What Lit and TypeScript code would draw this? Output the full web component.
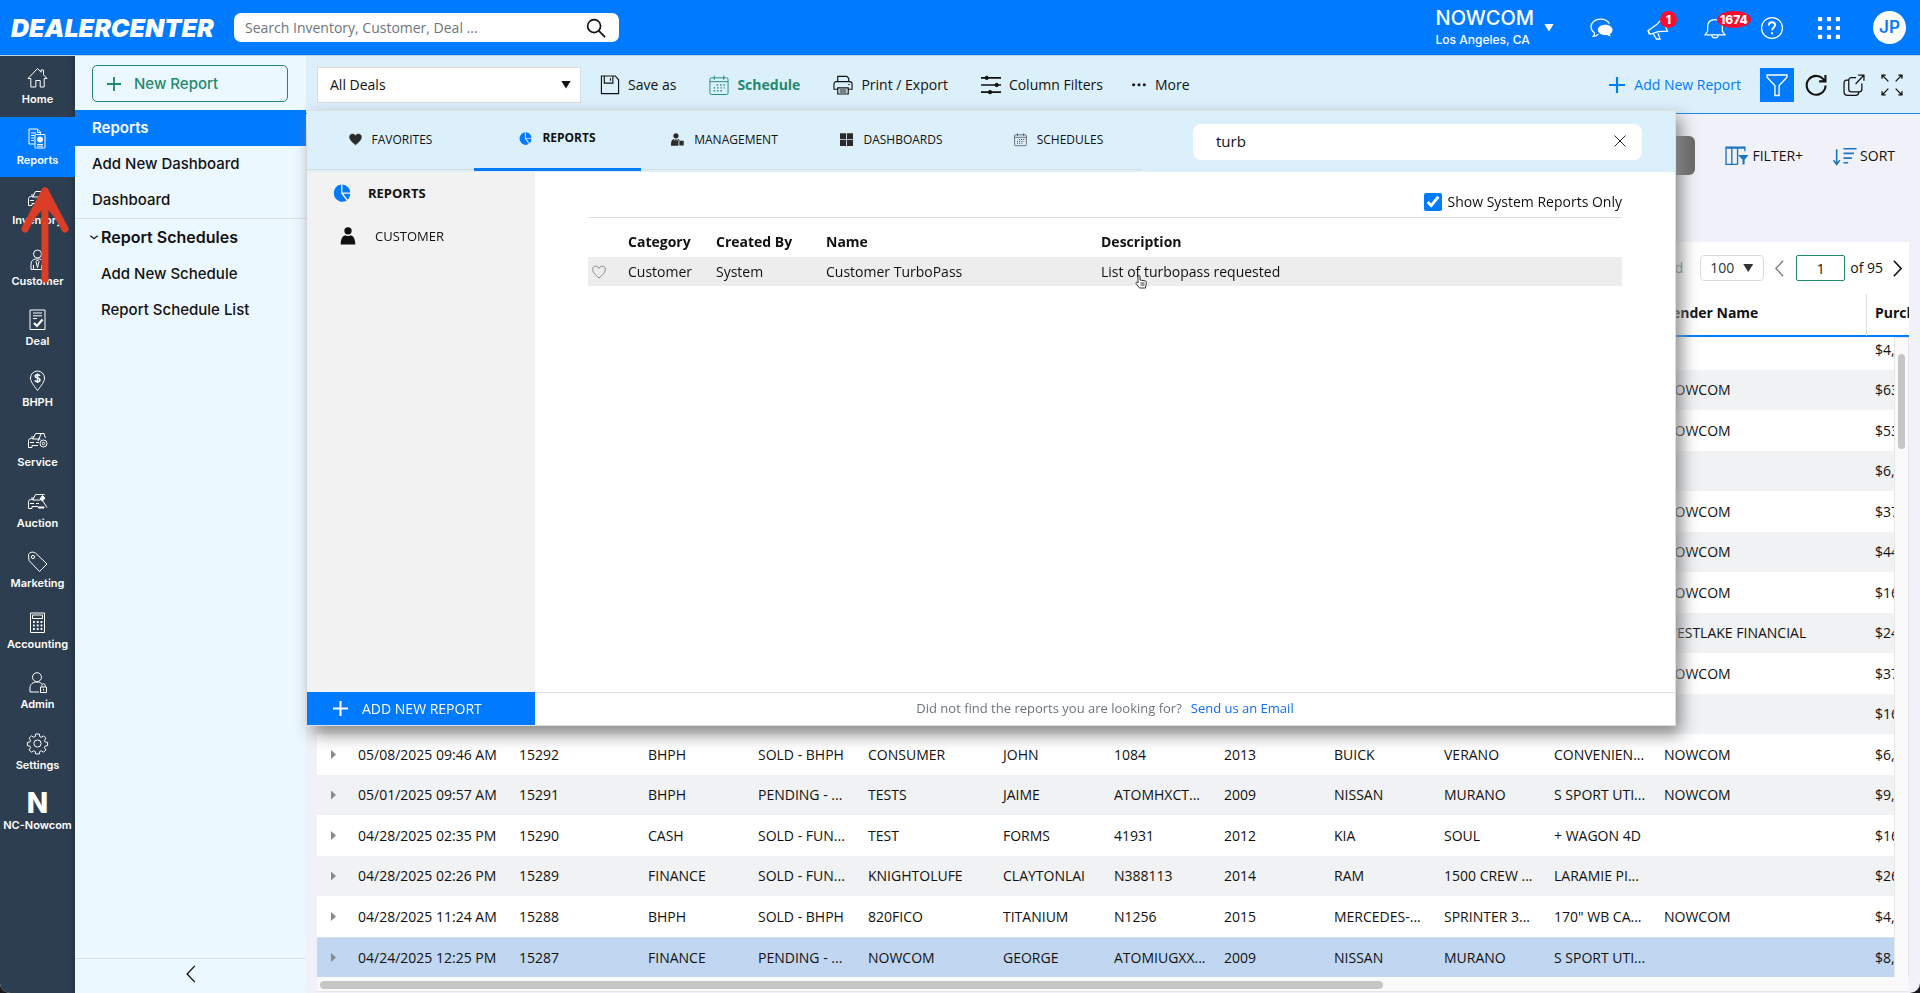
import { LitElement, html, svg, css, nothing, TemplateResult } from "lit";
import { customElement, state, query } from "lit/decorators.js";
import { classMap } from "lit/directives/class-map.js";

const CAR = svg`<path d="M6 8.500L8.500 3.500h9M4 7h3M5.500 9h8M1.500 10.500c0-2 2-2 5-2M1.500 10.500v7h3.500v-2h6M3 12.500h4M9 12.500h3"/>`;

const icons: Record<string, TemplateResult> = {
  home: svg`<path d="M1 11.500L10.500 1.500l3.500 3.700V3h2.500v4.800L20 11.500h-2.800V20h-4v-6.500H8.800V20h-5v-8.500z"/>`,
  reports: svg`<path d="M7.500 16H2V1h8.500l3 3v2.500M10.500 1v3.500h3M4 5h5M4 7.500h3.500M4 10h3M4 12.500h3"/><rect x="8" y="6.500" width="10" height="13.500" rx=".5"/><circle cx="13" cy="11.500" r="2.600" fill="currentColor"/><path d="M10 16.500h6M10 18.200h6"/>`,
  inventory: svg`${CAR}<path d="M17.500 3.500l2 5M13 15.500h6.500v-5"/>`,
  customer: svg`<circle cx="10.500" cy="5" r="4"/><path d="M4 20.500v-5.500c0-3 2-4.500 4.500-5h4c2.500.5 4.500 2 4.500 5v5.500zM10.500 11l-1.500 1.500 1.500 6 1.500-6zM6.500 16v4.500M14.500 16v4.500"/>`,
  deal: svg`<path d="M3 1h15v19.500H3zM6 4h9M6 6.800h9M6 9.600h4"/><path stroke-width="2.200" d="M7 14l3 3 5.500-6.500"/>`,
  bhph: svg`<path d="M10.500 20.500C6 14.500 3.500 11.500 3.500 8a7 7 0 0 1 14 0c0 3.500-2.500 6.500-7 12.500z"/><path stroke-width="1.500" d="M13 5.800c-.6-.9-1.500-1.100-2.500-1.100-1.300 0-2.300.5-2.300 1.600 0 2.500 4.800 1.100 4.800 3.600 0 1.200-1.100 1.700-2.500 1.700-1.100 0-2.100-.3-2.700-1.300M10.500 3.500v9.500"/>`,
  service: svg`${CAR}<circle cx="16.500" cy="13.500" r="3.500"/><circle cx="16.500" cy="13.500" r="1.200"/><path d="M14 4l-3 7M17 4l1.500 4"/>`,
  auction: svg`${CAR}<path fill="currentColor" d="M13 8l2.500-3.500 2.500 2.500-2.500 3zM11.500 16h5.500v1h-5.500z"/><path d="M15.500 9.500l4.500 7"/>`,
  marketing: svg`<path d="M1.500 3.500l.5 6 10.500 11 7.500-7.500L9 2.500C7 .5 3 .5 1.500 3.500z"/><circle cx="6" cy="6" r="1.600"/>`,
  accounting: svg`<path d="M3.500 1h14v19.500h-14zM5.500 3h10v3.500h-10z"/><path stroke-width="1.800" stroke-dasharray="1.800 2" d="M6 10h9.500M6 13.500h9.500M6 17h9.500"/>`,
  admin: svg`<circle cx="10" cy="5.200" r="4.500"/><path d="M12 20H3v-4c0-4 3-6 7-6 2 0 3.500.5 4.800 1.700M13.500 15h6v5.500h-6zM14.800 15v-1.500a1.700 1.700 0 0 1 3.400 0V15M16.500 17v1.500"/>`,
  settings: svg`<circle cx="10.500" cy="10.500" r="3.600"/><path d="M8.700 1h3.600l.5 2.700 1.500.6 2.200-1.500 2.400 2.400-1.500 2.300.6 1.400 2.600.5v3.200l-2.600.6-.6 1.400 1.500 2.300-2.400 2.400-2.200-1.500-1.500.6-.5 2.600H8.700l-.5-2.600-1.500-.6-2.200 1.500-2.400-2.400 1.500-2.300-.6-1.400-2.600-.6V9.400L3 8.900l.6-1.400L2.100 5.200l2.400-2.400 2.200 1.500 1.500-.6z"/>`,
  search: svg`<circle cx="8.500" cy="8.500" r="6.800" stroke-width="1.800"/><path stroke-width="1.800" d="M13.500 13.500L20 20"/>`,
  plus: svg`<path stroke-width="2.800" d="M10.500 0v21M0 10.500h21"/>`,
  save: svg`<path stroke-width="1.200" d="M1.500 1h14.500l3.500 4v14.500h-18zM4.500 1v7.500h9V1M11 3.500v2.500"/>`,
  calendar: svg`<rect x="1" y="3" width="19" height="17.500" rx="1.500"/><path d="M1 7h19M5.500 .5v4.500M15.500 .5v4.500"/><path stroke-width="1.500" stroke-dasharray="1.500 2" d="M8 10.500h8.500M5 13.500h11.500M5 16.500h8.500"/>`,
  print: svg`<path stroke-width="1.200" d="M5 7V1.500h9.500l2 2V7M5 15H1V9.500C1 8 2 7 3.500 7h14C19 7 20 8 20 9.500V15h-4M5 13.500h11V20H5zM7 15.700h7M7 17.800h7M16 10h1.500"/>`,
  sliders: svg`<path stroke-width="1.800" d="M0 3h21M0 10.500h21M0 18h21"/><g fill="currentColor"><circle cx="6" cy="3" r="1.800"/><circle cx="16.500" cy="10.500" r="1.800"/><circle cx="9.500" cy="18" r="1.800"/></g>`,
  dots: svg`<g fill="currentColor" stroke="none"><circle cx="2.500" cy="10" r="2.300"/><circle cx="10.500" cy="10" r="2.300"/><circle cx="18.500" cy="10" r="2.300"/></g>`,
  funnel: svg`<path stroke-width="1.300" d="M1 1h19v2l-7.500 8v9.500h-4V11L1 3z"/>`,
  refresh: svg`<path stroke-width="2" d="M18.500 6.500A9 9 0 1 0 19.600 11M19.500 1v6h-6"/>`,
  popout: svg`<path stroke-width="1.200" d="M12.500 3.500H8c-1.500 0-2.500 1-2.500 2.500v8.500C5.500 16 6.500 17 8 17h7.500c1.500 0 2.500-1 2.500-2.500V9M5.500 5.500C3 5.500 1 6 1 8.500v8.500c0 2 1.500 3.500 3.500 3.500h7.500c2 0 3-1.500 3-3.500M12 9.500l8-8.500M14.500 1H20v5.500"/>`,
  expand: svg`<path stroke-width="1.200" d="M7 7L1 1M1 4.500V1h3.500M14 7l6-6M16.500 1H20v3.500M7 14l-6 6M1 16.500V20h3.500M14 14l6 6M16.500 20H20v-3.500"/>`,
  heart: svg`<path fill="currentColor" d="M10.500 19C4 14 1 10.500 1 6.500 1 1 8 0 10.500 5 13 0 20 1 20 6.500c0 4-3 7.500-9.500 12.500z"/>`,
  heartline: svg`<path stroke-width="1.300" d="M10.500 19.500C4 14 1 10.500 1 6.500 1 1 8 0 10.500 5 13 0 20 1 20 6.500c0 4-3 7.500-9.500 13z"/>`,
  pie: svg`<g fill="currentColor" stroke="none"><path d="M9.500 .5v10.500l6.500 8.500A10.200 10.200 0 1 1 9.500 .5z"/><path d="M11 .5a10 10 0 0 1 9 9.500h-9z"/><path d="M12 11.500h8c0 3-1 5-2.800 6.800z"/></g>`,
  person: svg`<g fill="currentColor" stroke="none"><circle cx="10.500" cy="4.500" r="4.300"/><path d="M2 20.500c0-6 1.500-10 5.500-11 2 1.500 4 1.500 6 0 4 1 5.500 5 5.500 11z"/></g>`,
  manager: svg`<g fill="currentColor" stroke="none"><circle cx="8" cy="4.500" r="4.200"/><path d="M0 20.500c0-7 1-10 5-11l3 8 3-8c2 .3 2.500 1 3.500 2.500H12v8.500zM13.500 12.500h7V20h-7z"/><path d="M7 10h2l.8 5L8 18l-1.800-3z"/></g>`,
  dashboard: svg`<path fill="currentColor" stroke="none" d="M0 .5h9.800v9.500H0zM11.200 .5H21v9.500h-9.800zM0 11.500h9.800V21H0zM11.200 11.500H21V21h-9.800z"/>`,
  close: svg`<path stroke-width="1.600" d="M1 1l19 19M20 1L1 20"/>`,
  columns: svg`<path stroke-width="1.300" d="M12 18.500H1V2h18v4M1 3h18M6.500 3v15.500M12 3v15.500"/><path fill="currentColor" stroke="none" d="M12.500 9.500h10l-3.800 4.500v4.500h-2v-4.500z"/>`,
  sort: svg`<path stroke-width="1.500" d="M3.500 4v14M.5 14.500l3 4 3-4M10 3.500h12.500M10 8h10M10 12.500h8M10 17h4.500"/>`,
  left: svg`<path stroke-width="1.600" d="M15 1L6 10.500 15 20"/>`,
  right: svg`<path stroke-width="2" d="M6 1l9 9.500L6 20"/>`,
  down: svg`<path stroke-width="3.200" d="M1 7l9.500 8L20 7"/>`,
  chat: svg`<path stroke-width="1.200" d="M8 16.500c-1.500 1.200-3 2-5 2 1-1 1.500-2 1.300-3.300C2.200 13.700 1 11.700 1 9.500 1 5 5 2 10 2c4 0 7 1.500 8.500 4.500"/><path fill="currentColor" stroke="none" d="M14.500 7.500c4 0 7 2 7 5 0 1.800-1 3.200-2.500 4 .1 1 .6 1.700 1.300 2.200-1.500 0-2.700-.5-3.800-1.400-5 .6-9-1.500-9-4.800 0-3 3-5 7-5z"/>`,
  megaphone: svg`<path stroke-width="1.200" d="M14.500 1.500L19.500 13.500l-9 .5-7.500 2.500L1 13l8-5.500zM6 16l3 5h3.500l-2-5.500M1 13l1 3.500"/>`,
  bell: svg`<path stroke-width="1.200" d="M1 17h19l-2.500-3.500V9c0-4-2.500-6.500-7-6.500S3.500 5 3.500 9v4.500zM7.500 17a3 3 0 0 0 6 0"/>`,
  help: svg`<circle cx="10.500" cy="10.500" r="10" stroke-width="1.200"/><path stroke-width="1.800" d="M7.500 8c0-2 1.200-3 3-3s3 1.100 3 2.700c0 2.300-2.900 2.300-2.900 4.900M10.600 14.500v2"/>`,
  grid: svg`<g fill="currentColor" stroke="none">${[0, 8.5, 17].map((y) => [0, 8.5, 17].map((x) => svg`<rect x=${x} y=${y} width="4" height="4" rx="1"/>`))}</g>`,
};

const icon = (name: string, cls = "") =>
  html`<svg class="icon ${cls}" viewBox="0 0 21 21" aria-hidden="true">${icons[name]}</svg>`;

const railItems: [string, string][] = [
  ["home", "Home"], ["reports", "Reports"], ["inventory", "Inventory"], ["customer", "Customer"],
  ["deal", "Deal"], ["bhph", "BHPH"], ["service", "Service"], ["auction", "Auction"],
  ["marketing", "Marketing"], ["accounting", "Accounting"], ["admin", "Admin"], ["settings", "Settings"],
  ["", "NC-Nowcom"],
];

const columnWidths = [32, 161, 129, 110, 110, 135, 111, 110, 110, 110, 110, 110, 211, 110];
const lenderColumn = 12;

const coveredRow = (lender: string, price: string) => [...Array(11).fill(""), lender, price];

const deals: string[][] = [
  coveredRow("", "$4,"),
  coveredRow("NOWCOM", "$63,"),
  coveredRow("NOWCOM", "$53,"),
  coveredRow("", "$6,"),
  coveredRow("NOWCOM", "$37,"),
  coveredRow("NOWCOM", "$44,"),
  coveredRow("NOWCOM", "$16,"),
  coveredRow("WESTLAKE FINANCIAL", "$24,"),
  coveredRow("NOWCOM", "$37,"),
  coveredRow("", "$16,"),
  ["05/08/2025 09:46 AM", "15292", "BHPH", "SOLD - BHPH", "CONSUMER", "JOHN", "1084", "2013", "BUICK", "VERANO", "CONVENIEN...", "NOWCOM", "$6,"],
  ["05/01/2025 09:57 AM", "15291", "BHPH", "PENDING - ...", "TESTS", "JAIME", "ATOMHXCT...", "2009", "NISSAN", "MURANO", "S SPORT UTI...", "NOWCOM", "$9,"],
  ["04/28/2025 02:35 PM", "15290", "CASH", "SOLD - FUN...", "TEST", "FORMS", "41931", "2012", "KIA", "SOUL", "+ WAGON 4D", "", "$16,"],
  ["04/28/2025 02:26 PM", "15289", "FINANCE", "SOLD - FUN...", "KNIGHTOLUFE", "CLAYTONLAI", "N388113", "2014", "RAM", "1500 CREW ...", "LARAMIE PI...", "", "$26,"],
  ["04/28/2025 11:24 AM", "15288", "BHPH", "SOLD - BHPH", "820FICO", "TITANIUM", "N1256", "2015", "MERCEDES-...", "SPRINTER 3...", "170\" WB CA...", "NOWCOM", "$4,"],
  ["04/24/2025 12:25 PM", "15287", "FINANCE", "PENDING - ...", "NOWCOM", "GEORGE", "ATOMIUGXX...", "2009", "NISSAN", "MURANO", "S SPORT UTI...", "", "$8,"],
];

const base = css`
  :host { display: block; box-sizing: border-box; }
  *, *::before, *::after { box-sizing: border-box; }
  button, input, select { font: inherit; color: inherit; margin: 0; padding: 0; border: 0; background: none; }
  button { cursor: pointer; display: flex; align-items: center; white-space: nowrap; }
  a { color: inherit; text-decoration: none; }
  ul { list-style: none; margin: 0; padding: 0; }
  .icon { width: 20px; height: 20px; flex: none; overflow: visible; fill: none; stroke: currentColor; stroke-width: 1; }
  .tri { width: 10px; height: 8px; background: currentColor; clip-path: polygon(0 0, 100% 0, 50% 100%); }
  .pick { display: grid; align-items: center; }
  .pick > * { grid-area: 1 / 1; }
  .pick > select { appearance: none; width: 100%; height: 100%; }
  .pick > .tri { justify-self: end; pointer-events: none; }
`;

@customElement("app-header")
class AppHeader extends LitElement {
  static styles = [base, css`
    :host { display: flex; align-items: center; height: 56px; padding: 0 14px 0 11px; background: #007bff; border-bottom: 1px solid #b9cfe6; color: #fff; }
    .logo { width: 223px; font: italic 900 25px/28px Inter, sans-serif; }
    .search { display: flex; align-items: center; width: 385px; height: 29px; padding: 0 13px 0 11px; border-radius: 7px; background: #fff; color: #111; }
    .search input { flex: 1; min-width: 0; outline: 0; font: 14px/20px "Open Sans", sans-serif; }
    .search input::placeholder { color: #6c757d; opacity: 1; }
    .account { margin-left: auto; margin-right: 36px; gap: 10px; text-align: left; font-family: Inter, sans-serif; }
    .company { display: block; font-size: 20px; line-height: 24px; font-weight: 500; }
    .place { display: block; font-size: 12px; line-height: 20px; font-weight: 500; }
    .tools { display: flex; gap: 35px; margin-right: 33px; }
    .tool { position: relative; }
    .tool .icon { width: 22px; height: 22px; }
    .badge { position: absolute; left: 13px; top: -6px; min-width: 17px; height: 17px; padding: 0 3px; border-radius: 50%; background: #f80f2f; font: 800 12px/17px Inter, sans-serif; text-align: center; }
    .avatar { justify-content: center; width: 33px; height: 33px; border-radius: 50%; background: #fff; color: #007bff; font: 600 17px/33px Inter, sans-serif; }
  `];
  render() {
    return html`
      <div class="logo">DEALERCENTER</div>
      <div class="search">
        <input type="search" aria-label="Search" placeholder="Search Inventory, Customer, Deal ..." />
        <button aria-label="Search">${icon("search")}</button>
      </div>
      <button class="account"><span><span class="company">NOWCOM</span><span class="place">Los Angeles, CA</span></span><span class="tri"></span></button>
      <div class="tools">
        <button class="tool" aria-label="Chat">${icon("chat")}</button>
        <button class="tool" aria-label="Announcements">${icon("megaphone")}<span class="badge">1</span></button>
        <button class="tool" aria-label="Notifications">${icon("bell")}<span class="badge">1674</span></button>
        <button class="tool" aria-label="Help">${icon("help")}</button>
        <button class="tool" aria-label="Apps">${icon("grid")}</button>
      </div>
      <button class="avatar">JP</button>
    `;
  }
}

@customElement("app-rail")
class AppRail extends LitElement {
  static styles = [base, css`
    :host { position: relative; width: 75px; background: #2d3e50; color: #fff; box-shadow: inset -6px 0 8px -6px rgba(0, 0, 0, 0.3); }
    .item { display: flex; flex-direction: column; align-items: center; height: 60px; padding-top: 11px; gap: 4px; font: 600 11px/14px Inter, sans-serif; white-space: nowrap; }
    li:nth-child(odd) .item { height: 61px; }
    .item.active { background: #007bff; }
    .item .icon { width: 21px; height: 21px; }
    .letter { font: 800 28px/21px Inter, sans-serif; }
    .arrow { position: absolute; left: 20px; top: 130px; width: 50px; height: 100px; fill: none; stroke: #dc3d26; stroke-width: 7; stroke-linecap: round; stroke-linejoin: round; }
  `];
  render() {
    return html`
      <nav aria-label="Main"><ul>
        ${railItems.map(([name, label]) => html`<li><a href="#" class=${classMap({ item: true, active: name === "reports" })}>
          ${name ? icon(name) : html`<span class="letter" aria-hidden="true">N</span>`}<span>${label}</span></a></li>`)}
      </ul></nav>
      <svg class="arrow" viewBox="0 0 50 100" aria-hidden="true"><path d="M25 5v88"/><path d="M5 44L25 5l20 39L25 20z" fill="#dc3d26" stroke="none"/><path d="M5 43L25 5l20 38"/></svg>
    `;
  }
}

@customElement("report-menu")
class ReportMenu extends LitElement {
  static styles = [base, css`
    :host { display: flex; flex-direction: column; width: 231px; background: #ecf8ff; color: #111; font: 500 15px/20px Inter, sans-serif; }
    .new { height: 37px; margin: 9px 18px 8px 17px; padding: 0 14px; gap: 13px; border: 1px solid #1f8a70; border-radius: 5px; color: #1f8a70; }
    .new .icon { width: 14px; height: 14px; }
    .link { display: flex; align-items: center; height: 36px; padding-left: 17px; }
    .link.active { background: #007bff; color: #fff; font-weight: 600; }
    .group { display: flex; align-items: center; gap: 3px; height: 38px; padding: 0 0 2px 15px; border-top: 1px solid #dcdfe3; font: 600 16px/20px Inter, sans-serif; width: 100%; }
    .group .icon { width: 8px; height: 8px; }
    .sub { padding-left: 26px; }
    .collapse { justify-content: center; width: 100%; height: 35px; margin-top: auto; padding-bottom: 4px; border-top: 1px solid #dcdfe3; }
    .collapse .icon { width: 18px; height: 18px; }
  `];
  render() {
    return html`
      <button class="new">${icon("plus")}New Report</button>
      <a class="link active" href="#">Reports</a>
      <a class="link" href="#">Add New Dashboard</a>
      <a class="link" href="#">Dashboard</a>
      <button class="group">${icon("down")}Report Schedules</button>
      <a class="link sub" href="#">Add New Schedule</a>
      <a class="link sub" href="#">Report Schedule List</a>
      <button class="collapse" aria-label="Collapse menu">${icon("left")}</button>
    `;
  }
}

@customElement("report-toolbar")
class ReportToolbar extends LitElement {
  static styles = [base, css`
    :host { display: flex; align-items: center; gap: 33px; height: 58px; padding: 0 17px 0 11px; background: #dcf0fb; border-bottom: 1px solid #1a85f5; color: #111; font: 14px/20px "Open Sans", sans-serif; }
    .report { width: 264px; height: 36px; margin-right: -14px; border: 1px solid #d9dcdf; background: #fff; }
    .report select { padding-left: 12px; }
    .report .tri { margin-right: 9px; }
    .action { gap: 8px; }
    .schedule { color: #1f8a70; font-weight: 700; }
    .action.dots { gap: 9px; margin-left: -4px; }
    .dots .icon { width: 14px; height: 14px; }
    .add { gap: 9px; margin-left: auto; color: #007bff; }
    .add .icon { width: 16px; height: 16px; }
    .tools { display: flex; align-items: center; gap: 16px; margin-left: -14px; }
    .tools .icon { width: 22px; height: 22px; }
    .filter { justify-content: center; width: 34px; height: 34px; margin-right: -5px; background: #007bff; color: #fff; }
  `];
  render() {
    return html`
      <div class="report pick"><select aria-label="Report"><option>All Deals</option></select><span class="tri"></span></div>
      <button class="action">${icon("save")}Save as</button>
      <button class="action schedule">${icon("calendar")}Schedule</button>
      <button class="action">${icon("print")}Print / Export</button>
      <button class="action">${icon("sliders")}Column Filters</button>
      <button class="action dots">${icon("dots")}More</button>
      <button class="add">${icon("plus")}Add New Report</button>
      <div class="tools">
        <button class="filter" aria-label="Filter">${icon("funnel")}</button>
        <button aria-label="Refresh">${icon("refresh")}</button>
        <button aria-label="Open in new window">${icon("popout")}</button>
        <button aria-label="Full screen">${icon("expand")}</button>
      </div>
    `;
  }
}

@customElement("deal-grid")
class DealGrid extends LitElement {
  @query(".scroller") scroller!: HTMLElement;
  static styles = [base, css`
    :host { display: flex; flex-direction: column; min-height: 0; background: #fff; color: #111; font: 14px/20px "Open Sans", sans-serif; }
    .pager { display: flex; align-items: center; justify-content: flex-end; height: 52px; flex: none; padding-right: 3px; }
    .found { color: #777; margin-right: 17px; }
    .size { width: 64px; height: 26px; margin-right: 7px; border: 1px solid #d9dcdf; border-radius: 4px; color: #333; }
    .size select { padding-left: 9px; }
    .size .tri { margin-right: 10px; }
    .pager .icon { width: 17px; height: 17px; }
    .prev { color: #777; }
    .page { width: 49px; height: 26px; margin: 0 5px 0 8px; border: 1px solid #1f8a70; border-radius: 2px; text-align: center; }
    .next { margin-left: 6px; }
    .frame { position: relative; flex: 1; min-height: 0; display: flex; flex-direction: column; }
    .scroller { flex: 1; min-height: 0; overflow: hidden; }
    table { table-layout: fixed; border-collapse: separate; border-spacing: 0; }
    th { position: sticky; top: 0; height: 43px; padding: 0 9px 3px; background: #fff; border-bottom: 2px solid #007bff; text-align: left; font-weight: 700; white-space: nowrap; }
    th:last-child { border-left: 1px solid #dcdfe3; padding-left: 8px; }
    td { height: 41px; padding: 0 9px; white-space: nowrap; overflow: hidden; }
    tr:nth-child(even) td { height: 40px; background: #f0f2f4; }
    tr.selected td { height: 41px; background: #c1d7f1; border-top: 1px solid #dcdfe3; border-bottom: 1px solid #dcdfe3; }
    .open { width: 5px; height: 9px; margin-left: 5px; background: #8a8a8a; clip-path: polygon(0 0, 100% 50%, 0 100%); }
    .vbar { position: absolute; top: 43px; right: 0; bottom: 0; width: 15px; padding: 16px 3px; background: #fafafa; border: solid #e6e6e6; border-width: 1px 1px 0; }
    .vthumb { height: 95px; border-radius: 4px; background: #c6c6c6; }
    .hbar { height: 15px; flex: none; padding: 4px 3px 3px; background: #fafafa; border-bottom: 1px solid #e6e6e6; }
    .hthumb { width: 67%; height: 8px; border-radius: 4px; background: #c6c6c6; }
  `];
  firstUpdated() {
    this.scroller.scrollTop = 8;
  }
  render() {
    return html`
      <div class="pager">
        <span class="found">Found</span>
        <div class="size pick"><select aria-label="Rows per page"><option>100</option></select><span class="tri"></span></div>
        <button class="prev" aria-label="Previous page">${icon("left")}</button>
        <input class="page" aria-label="Page" value="1" />
        <span>of 95</span>
        <button class="next" aria-label="Next page">${icon("right")}</button>
      </div>
      <div class="frame">
        <div class="scroller">
          <table style="width: ${columnWidths.reduce((a, b) => a + b)}px">
            <colgroup>${columnWidths.map((w) => html`<col style="width: ${w}px" />`)}</colgroup>
            <thead><tr>${columnWidths.map((_, i) => html`<th>${i === lenderColumn ? "Lender Name" : i > lenderColumn ? "Purchase" : nothing}</th>`)}</tr></thead>
            <tbody>${deals.map((row, i) => html`<tr class=${classMap({ selected: i === deals.length - 1 })}>
              <td>${row[0] ? html`<button class="open" aria-label="Expand row"></button>` : nothing}</td>${row.map((cell) => html`<td>${cell}</td>`)}
            </tr>`)}</tbody>
          </table>
        </div>
        <div class="vbar"><div class="vthumb"></div></div>
      </div>
      <div class="hbar"><div class="hthumb"></div></div>
    `;
  }
}

@customElement("report-picker")
class ReportPicker extends LitElement {
  @state() tab = "REPORTS";
  static styles = [base, css`
    :host { display: flex; flex-direction: column; height: 616px; border: 1px solid #dcdfe3; border-left: 0; background: #fff; color: #111; box-shadow: 5px 8px 16px #888; font: 14px/20px "Open Sans", sans-serif; }
    .top { display: flex; height: 61px; flex: none; background: #dcf0fb; }
    .tabs { display: flex; height: 59px; border-bottom: 1px solid #d9dcdf; font-size: 12px; }
    .tab { justify-content: center; gap: 10px; width: 167px; height: 60px; border-bottom: 3px solid transparent; }
    .tab.active { border-bottom-color: #007bff; font-weight: 700; padding-bottom: 3px; }
    .tab .icon { width: 13px; height: 13px; color: #2a2a2a; }
    .tab.active .icon { color: #007bff; }
    .find { display: flex; align-items: center; flex: 1; height: 36px; margin: 13px 33px 0 51px; padding: 0 16px 2px 23px; border-radius: 8px; background: #fff; }
    .find input { flex: 1; min-width: 0; outline: 0; font-size: 15px; }
    .find .icon { width: 12px; height: 12px; }
    .body { display: flex; flex: 1; min-height: 0; }
    .cats { width: 228px; background: #f2f2f2; font-size: 13px; }
    .cat { gap: 17px; width: 100%; height: 41px; padding-left: 26px; }
    .cat .icon { width: 18px; height: 18px; }
    .cat.all { font-weight: 700; }
    .cat.all .icon { color: #007bff; }
    .cat.child { height: 45px; padding-left: 32px; gap: 18px; }
    .list { flex: 1; padding: 18px 53px 0; }
    .only { display: flex; align-items: center; justify-content: flex-end; gap: 5px; height: 24px; }
    .only input { width: 18px; height: 18px; accent-color: #007bff; }
    table { width: 100%; margin-top: 3px; border-top: 1px solid #dcdfe3; border-spacing: 0; text-align: left; table-layout: fixed; }
    th { height: 39px; padding: 8px 0 0; }
    td { height: 29px; padding: 0; background: #ededed; }
    td:last-child { white-space: nowrap; }
    .fav { padding-left: 4px; color: #777; }
    .fav .icon { width: 14px; height: 14px; }
    .c1 { width: 40px; } .c2 { width: 88px; } .c3 { width: 110px; } .c4 { width: 275px; }
    .foot { display: flex; height: 33px; flex: none; }
    .add { width: 228px; padding-left: 26px; gap: 14px; background: #007bff; color: #fff; }
    .add .icon { width: 15px; height: 15px; }
    .ask { flex: 1; display: flex; align-items: center; justify-content: center; gap: 9px; padding-bottom: 2px; border-top: 1px solid #dcdfe3; color: #6c757d; font-size: 13px; }
    .ask a { color: #0d6efd; }
    .hand { position: absolute; left: 828px; top: 164px; width: 12px; height: 14px; fill: #fff; stroke: #333; stroke-width: 1; }
  `];
  private tabs: [string, string][] = [["heart", "FAVORITES"], ["pie", "REPORTS"], ["manager", "MANAGEMENT"], ["dashboard", "DASHBOARDS"], ["calendar", "SCHEDULES"]];
  render() {
    return html`
      <div class="top">
        <div class="tabs" role="tablist">
          ${this.tabs.map(([name, label]) => html`<button role="tab" aria-selected=${this.tab === label ? "true" : "false"}
            class=${classMap({ tab: true, active: this.tab === label })} @click=${() => (this.tab = label)}>${icon(name)}${label}</button>`)}
        </div>
        <div class="find"><input aria-label="Find a report" value="turb" /><button aria-label="Clear">${icon("close")}</button></div>
      </div>
      <div class="body">
        <div class="cats">
          <button class="cat all">${icon("pie")}REPORTS</button>
          <button class="cat child">${icon("person")}CUSTOMER</button>
        </div>
        <div class="list">
          <label class="only"><input type="checkbox" checked />Show System Reports Only</label>
          <table>
            <colgroup><col class="c1" /><col class="c2" /><col class="c3" /><col class="c4" /><col /></colgroup>
            <thead><tr><th></th><th>Category</th><th>Created By</th><th>Name</th><th>Description</th></tr></thead>
            <tbody><tr><td><button class="fav" aria-label="Add to favorites">${icon("heartline")}</button></td><td>Customer</td><td>System</td><td>Customer TurboPass</td><td>List of turbopass requested</td></tr></tbody>
          </table>
        </div>
      </div>
      <div class="foot">
        <button class="add">${icon("plus")}ADD NEW REPORT</button>
        <div class="ask"><span>Did not find the reports you are looking for?</span><a href="#">Send us an Email</a></div>
      </div>
      <svg class="hand" viewBox="0 0 12 14" aria-hidden="true"><path d="M3 8V1.500a1 1 0 0 1 2 0V5l5 .8c1 .2 1.500 1 1.300 2L10.500 13h-6L1 8.500c-.5-1 .8-1.800 2-.5zM5.500 8h4M5.500 10h4"/></svg>
    `;
  }
}

@customElement("app-root")
class AppRoot extends LitElement {
  static styles = [base, css`
    :host { height: 100vh; min-height: 700px; background: #16181c; }
    .window { display: flex; flex-direction: column; height: 100%; overflow: hidden; border-radius: 0 0 10px 10px; background: #f1f2f9; }
    .work { display: flex; flex: 1; min-height: 0; }
    app-rail, report-menu { flex: none; }
    main { position: relative; display: flex; flex-direction: column; flex: 1; min-width: 0; }
    .bar { display: flex; justify-content: flex-end; gap: 29px; padding: 22px 25px 67px; color: #111; font: 14px/20px "Open Sans", sans-serif; }
    .grey { width: 120px; height: 39px; border-radius: 6px; background: #686868; }
    .tool { gap: 4px; }
    .tool .icon { width: 24px; height: 22px; color: #1a74c4; }
    deal-grid { flex: 1; margin: 0 11px 1px; }
    report-picker { position: absolute; left: 1px; top: 54px; width: calc(100% - 245px); }
  `];
  render() {
    return html`
      <div class="window">
        <app-header></app-header>
        <div class="work">
          <app-rail></app-rail>
          <report-menu></report-menu>
          <main>
            <report-toolbar></report-toolbar>
            <div class="bar">
              <button class="grey" aria-label="Apply"></button>
              <button class="tool">${icon("columns")}FILTER+</button>
              <button class="tool">${icon("sort")}SORT</button>
            </div>
            <deal-grid></deal-grid>
            <report-picker></report-picker>
          </main>
        </div>
      </div>
    `;
  }
}
